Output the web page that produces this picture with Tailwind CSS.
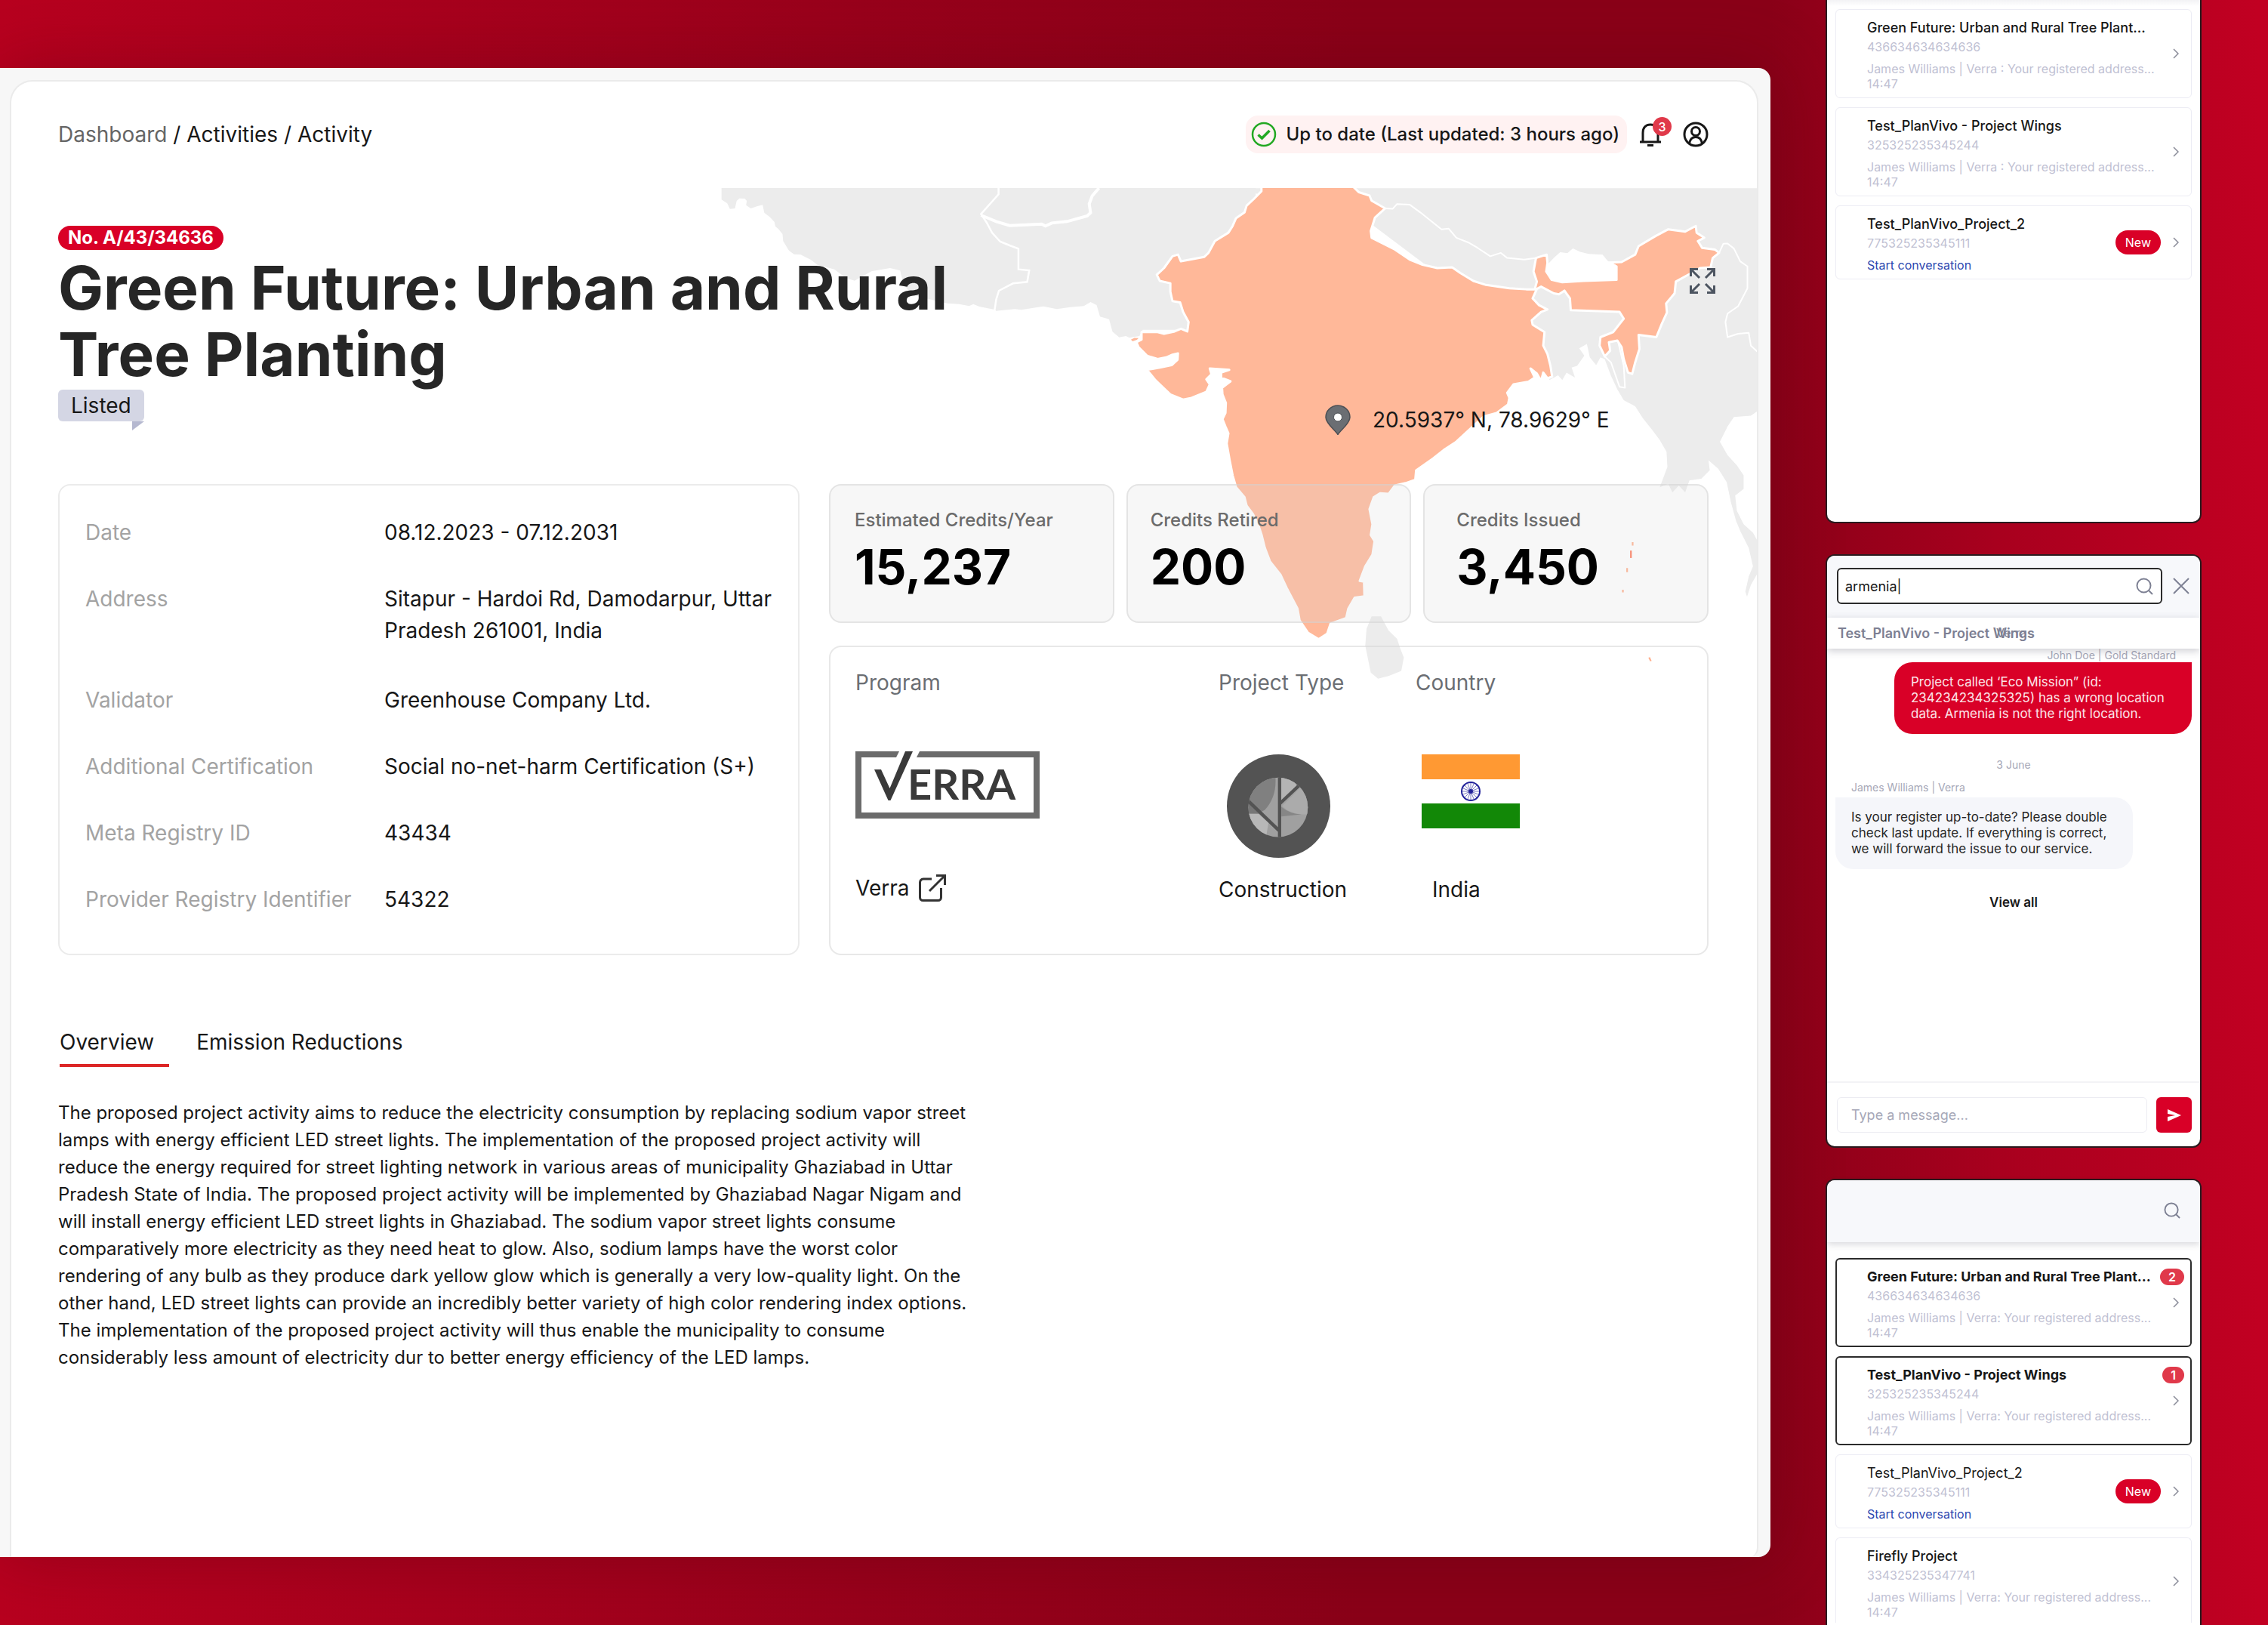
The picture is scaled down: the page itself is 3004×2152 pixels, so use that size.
<!DOCTYPE html>
<html lang="en">
<head>
<meta charset="utf-8">
<title>Green Future: Urban and Rural Tree Planting</title>
<script src="https://cdn.jsdelivr.net/npm/@tailwindcss/browser@4"></script>
</head>
<body class="font-['Inter',sans-serif] text-[#171717]">
<div class="flex min-h-screen items-stretch gap-[73px] overflow-hidden bg-[linear-gradient(90deg,#b8001f_0%,#98001b_38%,#8a0018_60%,#8a0018_78%,#a8001e_88%,#c20022_100%)] pr-[88px]">

  <!-- Activity window -->
  <main class="my-[90px] flex min-w-0 flex-1 flex-col rounded-r-2xl bg-[#f7f7f7] pt-4 pr-4 pl-[13px] shadow-[0_0_90px_rgba(90,0,16,0.35)]">
    <div class="relative flex-1 overflow-hidden rounded-t-[30px] rounded-br-xl border-2 border-b-0 border-[#ebebeb] bg-white px-[62px] pt-[45px]">

      <!-- Map -->
      <div class="absolute top-[141px] right-0 h-[660px] w-[1377px]">
        <svg class="size-full" viewBox="950 249 1377 660" role="img" aria-label="Map of India">
          <g transform="translate(940 230) scale(0.446429 0.333333)" fill="#ececec">
            <path d="M35,57V103L52,118L60,140L75,138L80,108L88,98L104,99L110,108L108,125L122,138L140,130L157,124L162,155L178,172L192,192L195,210L204,220L216,240L218,268L235,305L250,320L270,322L300,342L320,362L370,380L405,415L430,425L480,388L535,375L565,385L575,440L600,480L640,495L705,515L740,518L770,526L782,518L800,528L845,540L850,545L905,538L925,541L960,533L990,527L1030,538L1070,530L1110,526L1130,510L1148,522L1158,568L1185,578L1195,628L1215,650L1235,645L1245,652L1275,645L1285,620H1420L1620,400V57Z"/>
            <g fill="none" stroke="#fff">
              <path vector-effect="non-scaling-stroke" stroke-width="2.5" d="M857,57V82L805,160L822,195L838,235L862,270L890,285L916,298V380L948,384L942,430L900,436L858,465L850,500L845,545"/>
              <path vector-effect="non-scaling-stroke" stroke-width="4" d="M805,165L850,190L890,206L985,200L996,208L1015,196L1060,190L1120,168L1130,155L1126,120L1135,88L1155,57"/>
            </g>
          </g>
          <g transform="translate(1480 230) scale(0.561224 0.446429)" stroke-linejoin="round">
            <path fill="#ececec" d="M280,43H1512V703L1495,718L1455,722L1440,750L1422,795L1440,835L1462,865L1478,895V935L1458,955L1462,1000L1478,1040L1500,1065L1511,1090V1185L1495,1220L1486,1255L1482,1240L1490,1195L1500,1165L1490,1110L1470,1060L1460,1030L1448,975L1438,915L1418,875L1395,850L1398,880L1378,905L1350,910L1340,945L1325,925L1310,945L1300,920L1280,930L1298,870L1296,825L1280,790L1262,760L1240,725L1222,690L1195,672L1180,640L1165,600L1150,550L1140,545L1130,568L1115,545L1108,505L1090,518L1102,540L1085,570L1072,575L1080,605L1060,590L1050,612L1040,598L1020,612L970,500L600,150Z"/>
            <path fill="#ffb899" stroke="#fff" stroke-width="3" vector-effect="non-scaling-stroke" d="M340,38V52L322,75L305,95L300,115L280,132L272,155L262,175L230,200L215,235L205,247L150,260L143,240L130,245L110,280L93,300L100,318L125,325V350L130,378L148,382L155,410L168,440L165,468L150,460L135,468L110,475L95,470H57V492L45,500L50,515L70,540L95,550L115,545L130,537L143,533L142,552L128,568L100,575L70,582L90,613L125,655L155,670L175,665L210,647L218,625L210,610L222,595L218,578L264,582L245,590V605L267,616L247,635L248,655L256,680L255,710L248,728L255,750L262,770L258,800L265,850L272,895L280,930L300,960L305,985L320,1010L332,1040L340,1070L348,1110L360,1150L385,1190L400,1230L425,1290L430,1325L450,1362L475,1381L495,1365L503,1335L540,1318L545,1290L560,1258L583,1254L582,1210L572,1208L585,1165L602,1130L607,1090L598,1072L602,1040L595,995L605,960L620,948L640,950L655,925L680,918L703,908L705,880L745,845L770,820L800,795L830,760L865,720L895,710L922,685L925,665L920,650L935,625L970,617L985,605L975,578L990,593L1000,615L1005,590L1015,607L1026,602L1022,570L1015,535L1005,510L1008,470L980,448L978,435L1000,410L1015,403L995,390L980,370L990,342L1000,335L1030,355L1042,358L1055,347L1068,370L1070,405L1185,410L1195,430L1170,470L1140,485L1138,510L1150,542L1163,525L1160,500L1180,495L1190,515L1195,550L1205,590L1215,594L1222,560L1232,520L1230,478L1272,485L1285,445L1297,412L1295,385L1315,355L1318,320L1350,298L1375,280L1400,278L1405,250L1420,235L1410,225L1380,220L1370,200L1385,190L1367,175L1365,155L1340,172L1300,165L1270,185L1230,215L1222,240L1190,262L1158,264L1178,275V315L1100,318L1050,322L1025,315L1012,290L1015,265L1013,240L988,250L982,290L990,320L985,343H965L925,340L870,330L840,318L810,295L790,278L755,280L720,270L690,255L655,225L600,190L598,170L608,130L632,103L600,80L595,65L570,55L556,38Z"/>
            <path fill="#ffb899" d="M32,492L40,487L50,488L46,493L36,497Z"/>
            <path fill="#fff" d="M1012,290L1016,268L1030,250L1045,233L1062,236L1075,222L1092,232L1112,238L1145,240L1158,260L1176,270V313L1100,318L1050,322L1025,315Z"/>
            <g fill="none" stroke="#fff" stroke-width="2">
              <path vector-effect="non-scaling-stroke" d="M632,103L650,104L660,90L690,92L715,115L740,140L765,165L782,163L800,190L830,205L850,220L880,245L905,235L920,250L960,255L988,250"/>
              <path vector-effect="non-scaling-stroke" d="M1150,542L1165,560L1185,632L1198,635L1195,570L1182,500"/>
              <path vector-effect="non-scaling-stroke" d="M1405,250L1420,235L1430,208L1440,207L1455,222L1470,260L1487,275V340L1465,393L1440,415L1435,440L1440,485L1465,475L1490,472L1495,510L1512,530"/>
            </g>
            <path fill="#ececec" d="M600,1313H622L640,1355L660,1380L668,1410L676,1435L670,1475L640,1490L615,1498L598,1480L585,1400L588,1350Z"/>
            <g fill="none" stroke="#ffb08e" stroke-width="4">
              <path d="M1216,1093V1103M1203,1170V1182M1193,1234V1242M1255,1435L1259,1446"/>
              <path stroke="#ff7a5a" d="M1212,1118V1140"/>
            </g>
          </g>
        </svg>
        <button type="button" aria-label="Expand map" class="absolute top-[106px] right-[55px] size-[34px]">
          <svg class="size-full" viewBox="0 0 34 34" fill="none" stroke="#4d5561" stroke-width="3"><path d="M1.500 11V1.500H11M2 2L13 13M23 1.500H32.500V11M32 2L21 13M1.500 23V32.500H11M2 32L13 21M23 32.500H32.500V23M32 32L21 21"/></svg>
        </button>
        <div class="absolute top-[286px] left-[805px] flex items-center gap-[29px]">
          <svg class="h-10 w-[34px]" viewBox="0 0 34 40"><path d="M17,39.500C13,33 1,25 1,16.500A16,15.500 0 0 1 33,16.500C33,25 21,33 17,39.500Z" fill="#6b6e73" stroke="#4c4f54" stroke-width="1.500"/><circle cx="17" cy="16.500" r="5.500" fill="#fff" stroke="#4c4f54"/></svg>
          <span class="text-[28px] leading-[42px]">20.5937° N, 78.9629° E</span>
        </div>
      </div>

      <header class="relative flex h-[50px] items-center justify-between pr-0.5">
        <nav aria-label="Breadcrumb" class="text-[28px] leading-[42px]"><a href="#" class="text-[#666]">Dashboard</a> / <a href="#">Activities</a> / <a href="#">Activity</a></nav>
        <div class="flex items-center gap-4">
          <div class="flex h-[50px] items-center gap-3 rounded-2xl bg-[#fff2f2] pr-2.5 pl-[7px]">
            <svg class="size-[34px]" viewBox="0 0 34 34" fill="none" stroke="#22a822"><circle cx="17" cy="17" r="15" stroke-width="2.500"/><path d="M9.500 17.500L14.500 22L24.500 12" stroke-width="3.500"/></svg>
            <span class="text-[24px] leading-[42px] font-medium">Up to date (Last updated: 3 hours ago)</span>
          </div>
          <button type="button" aria-label="Notifications, 3 unread" class="relative size-[34px]">
            <svg class="size-full" viewBox="0 0 34 34" fill="none" stroke="#171717" stroke-width="3"><path d="M1 27H29M5 27V15C5 8 9 4 15 4S25 8 25 15V27"/><path d="M11 31.500H19"/></svg>
            <span class="absolute -top-1.5 left-[18px] flex size-[25px] items-center justify-center rounded-full bg-[#e0394a] text-[16px] leading-5 font-medium text-white">3</span>
          </button>
          <button type="button" aria-label="Account" class="ml-2 size-[34px]">
            <svg class="size-full" viewBox="0 0 34 34" fill="none" stroke="#171717" stroke-width="3"><circle cx="17" cy="17" r="15"/><circle cx="17" cy="13" r="5.500"/><path d="M8.500 29C9.500 23 12.500 20.500 17 20.500S24.500 23 25.500 29"/></svg>
          </button>
        </div>
      </header>

      <section class="relative mt-24 flex flex-col items-start">
        <span class="flex h-8 items-center rounded-2xl bg-[#d90027] px-[13px] text-[24px] leading-8 font-bold text-white">No. A/43/34636</span>
        <h1 class="mt-1.5 max-w-[1240px] text-[80px] leading-[88px] font-bold text-[#262626]">Green Future: Urban and Rural Tree Planting</h1>
        <div class="relative mt-[3px] rounded-md bg-[#d4d6e4] px-[17px] text-[28px] leading-[42px]">Listed
          <svg class="absolute top-full right-0 h-3 w-4" viewBox="0 0 16 12"><path d="M0 0H16L0 12Z" fill="#b5b8d0"/></svg>
        </div>
      </section>

      <section class="relative mt-[83px] grid grid-cols-[982fr_1165fr] gap-[39px] pr-0.5">
        <dl class="flex flex-col gap-[46px] rounded-2xl border-2 border-[#ebebeb] pt-[41px] pb-[51px] pl-[34px] text-[28px] leading-[42px]">
          <div class="flex"><dt class="w-[396px] shrink-0 text-[#a3a3a3]">Date</dt><dd>08.12.2023 - 07.12.2031</dd></div>
          <div class="flex pb-1"><dt class="w-[396px] shrink-0 text-[#a3a3a3]">Address</dt><dd>Sitapur - Hardoi Rd, Damodarpur, Uttar Pradesh 261001, India</dd></div>
          <div class="flex"><dt class="w-[396px] shrink-0 text-[#a3a3a3]">Validator</dt><dd>Greenhouse Company Ltd.</dd></div>
          <div class="flex"><dt class="w-[396px] shrink-0 text-[#a3a3a3]">Additional Certification</dt><dd>Social no-net-harm Certification (S+)</dd></div>
          <div class="flex"><dt class="w-[396px] shrink-0 text-[#a3a3a3]">Meta Registry ID</dt><dd>43434</dd></div>
          <div class="flex"><dt class="w-[396px] shrink-0 text-[#a3a3a3]">Provider Registry Identifier</dt><dd>54322</dd></div>
        </dl>

        <div class="flex flex-col gap-[30px]">
          <div class="grid h-[184px] grid-cols-3 gap-4">
            <div class="rounded-2xl border-2 border-[#d2d2d2]/50 bg-[#dcdcdc]/22 pt-7 pl-8">
              <p class="text-[24px] leading-9 font-medium text-[#6b6b6b]">Estimated Credits/Year</p>
              <p class="text-[64px] leading-[88px] font-bold text-black">15,237</p>
            </div>
            <div class="rounded-2xl border-2 border-[#d2d2d2]/50 bg-[#dcdcdc]/22 pt-7 pl-[30px]">
              <p class="text-[24px] leading-9 font-medium text-[#6b6b6b]">Credits Retired</p>
              <p class="text-[64px] leading-[88px] font-bold text-black">200</p>
            </div>
            <div class="rounded-2xl border-2 border-[#d2d2d2]/50 bg-[#dcdcdc]/22 pt-7 pl-[42px]">
              <p class="text-[24px] leading-9 font-medium text-[#6b6b6b]">Credits Issued</p>
              <p class="text-[64px] leading-[88px] font-bold text-black">3,450</p>
            </div>
          </div>

          <div class="grid flex-1 grid-cols-[481px_261px_1fr] rounded-2xl border-2 border-[#d2d2d2]/50 pt-[26px] pl-[33px] text-[28px] leading-[42px]">
            <div class="flex flex-col">
              <h2 class="text-[#6b6e73]">Program</h2>
              <div class="flex h-[230px] items-center">
                <svg class="h-[90px] w-[244px]" viewBox="0 0 244 90" role="img" aria-label="Verra">
                  <path fill="#6b6b6b" d="M0 0H58L54 8H8V81H236V8H81L85 0H244V89H0Z"/>
                  <path fill="#3a3a3a" d="M25 24H34L45.500 49L66 0H76L46.500 65H43.500Z"/>
                  <text x="69" y="64" fill="#3a3a3a" font-family="Lato, sans-serif" font-weight="700" font-size="56">ERRA</text>
                </svg>
              </div>
              <a href="#" class="flex items-center gap-3">Verra
                <svg class="size-[38px]" viewBox="0 0 38 38" fill="none" stroke="#333" stroke-width="3"><path d="M18 7H7A5 5 0 0 0 2.500 11.500V31.500A4 4 0 0 0 6.500 35.500H26.500A4 4 0 0 0 30.500 31.500V19"/><path d="M15 23L35 3M24 2.500H35.500V15"/></svg>
              </a>
            </div>
            <div class="flex flex-col">
              <h2 class="text-[#6b6e73]">Project Type</h2>
              <div class="flex h-[232px] items-center pt-[52px] pl-[11px]">
                <svg class="size-[137px]" viewBox="80 54 410 410" role="img" aria-label="Construction">
                  <circle cx="285" cy="259" r="205" fill="#535353"/>
                  <clipPath id="lens"><circle cx="283" cy="264" r="118"/></clipPath>
                  <g clip-path="url(#lens)">
                    <path fill="#a0a0a0" d="M160 140H410V390H160Z"/>
                    <path fill="#808080" d="M160 140H272Q280 220 230 275L200 290L160 250Z"/>
                    <path fill="#767676" d="M160 245L215 290H160Z"/>
                    <path fill="#b8b8b8" d="M160 290H205L245 325L235 385H160Z"/>
                    <path fill="#b4b4b4" d="M296 140H345L355 180L296 235Z"/>
                    <path fill="#ababab" d="M300 258L372 185L410 200V292Q330 295 300 258Z"/>
                    <path fill="#868686" d="M296 262Q330 290 375 292L296 300Z"/>
                    <path stroke="#535353" stroke-width="13" fill="none" d="M289 140V390M160 234L289 358M289 250L372 172"/>
                  </g>
                </svg>
              </div>
              <p>Construction</p>
            </div>
            <div class="flex flex-col">
              <h2 class="text-[#6b6e73]">Country</h2>
              <div class="flex h-[232px] items-center pt-3.5 pl-2">
                <svg class="h-[98px] w-[130px]" viewBox="0 0 130 98" role="img" aria-label="Flag of India">
                  <path fill="#fff" d="M0 0H130V98H0Z"/><path fill="#ff9933" d="M0 0H130V33H0Z"/><path fill="#128807" d="M0 65H130V98H0Z"/>
                  <g stroke="#22229a" fill="none"><circle cx="65" cy="49" r="12" stroke-width="2"/><path stroke-width="1" stroke-opacity=".6" d="M65 38V60M54 49H76M57 41L73 57M73 41L57 57M61 39L69 59M69 39L61 59M55 45L75 53M55 53L75 45"/></g>
                  <circle cx="65" cy="49" r="3" fill="#22229a"/>
                </svg>
              </div>
              <p class="pl-[22px]">India</p>
            </div>
          </div>
        </div>
      </section>

      <section class="relative mt-[94px]">
        <div role="tablist" class="flex items-start gap-9 pl-0.5 text-[28px] leading-[42px]">
          <button type="button" role="tab" aria-selected="true" class="border-b-4 border-[#dc2626] pr-5 pb-2">Overview</button>
          <button type="button" role="tab" aria-selected="false">Emission Reductions</button>
        </div>
        <p class="mt-[43px] max-w-[1220px] text-[24px] leading-9">The proposed project activity aims to reduce the electricity consumption by replacing sodium vapor street lamps with energy efficient LED street lights. The implementation of the proposed project activity will reduce the energy required for street lighting network in various areas of municipality Ghaziabad in Uttar Pradesh State of India. The proposed project activity will be implemented by Ghaziabad Nagar Nigam and will install energy efficient LED street lights in Ghaziabad. The sodium vapor street lights consume comparatively more electricity as they need heat to glow. Also, sodium lamps have the worst color rendering of any bulb as they produce dark yellow glow which is generally a very low-quality light. On the other hand, LED street lights can provide an incredibly better variety of high color rendering index options. The implementation of the proposed project activity will thus enable the municipality to consume considerably less amount of electricity dur to better energy efficiency of the LED lamps.</p>
      </section>
    </div>
  </main>

  <!-- Conversations -->
  <aside class="flex w-[498px] shrink-0 flex-col gap-[41px]">
    <section class="min-h-[693px] rounded-b-xl border-2 border-t-0 border-[#2a1a1e] bg-white bg-linear-to-b from-[#f3f3f5] to-white to-[8px] px-[11px] pt-3">
      <ul class="flex flex-col gap-3">
        <li class="flex items-center rounded-md border border-[#ececf4] pt-3 pr-4 pb-[7px] pl-[41px]">
          <div class="min-w-0 flex-1 text-[16px] leading-5 text-[#bfc1d3]">
            <h3 class="text-[18px] leading-6 font-medium whitespace-nowrap text-[#171717]">Green Future: Urban and Rural Tree Plant...</h3>
            <p class="leading-[26px]">436634634634636</p>
            <p class="mt-1.5 whitespace-nowrap">James Williams | Verra : Your registered address...</p>
            <p class="pb-px">14:47</p>
          </div>
          <svg class="mb-1.5 h-3.5 w-2" viewBox="0 0 8 14" fill="none" stroke="#8a8c99" stroke-width="1.500"><path d="M1 1L7 7L1 13"/></svg>
        </li>
        <li class="flex items-center rounded-md border border-[#ececf4] pt-3 pr-4 pb-[7px] pl-[41px]">
          <div class="min-w-0 flex-1 text-[16px] leading-5 text-[#bfc1d3]">
            <h3 class="text-[18px] leading-6 font-medium whitespace-nowrap text-[#171717]">Test_PlanVivo - Project Wings</h3>
            <p class="leading-[26px]">325325235345244</p>
            <p class="mt-1.5 whitespace-nowrap">James Williams | Verra : Your registered address...</p>
            <p class="pb-px">14:47</p>
          </div>
          <svg class="mb-1.5 h-3.5 w-2" viewBox="0 0 8 14" fill="none" stroke="#8a8c99" stroke-width="1.500"><path d="M1 1L7 7L1 13"/></svg>
        </li>
        <li class="flex items-center rounded-md border border-[#ececf4] pt-3 pr-4 pb-2 pl-[41px]">
          <div class="min-w-0 flex-1 text-[16px] leading-5 text-[#bfc1d3]">
            <h3 class="text-[18px] leading-6 font-medium whitespace-nowrap text-[#171717]">Test_PlanVivo_Project_2</h3>
            <p class="leading-[26px]">775325235345111</p>
            <a href="#" class="mt-1.5 block text-[#2b47b0]">Start conversation</a>
          </div>
          <span class="mr-4 mb-1 flex h-8 items-center rounded-full bg-[#d90027] px-[13px] text-[16px] leading-5 text-white">New</span>
          <svg class="mb-1 h-3.5 w-2" viewBox="0 0 8 14" fill="none" stroke="#8a8c99" stroke-width="1.500"><path d="M1 1L7 7L1 13"/></svg>
        </li>
      </ul>
    </section>

    <section class="flex min-h-[786px] flex-col overflow-hidden rounded-xl border-2 border-[#2a1a1e] bg-white">
      <form class="flex items-start gap-3.5 bg-[#f7f8fb] pt-4 pr-3.5 pb-[18px] pl-[13px]">
        <label class="flex h-12 min-w-0 flex-1 items-center rounded-md border-2 border-[#2b2b2b] bg-white pr-2.5 pl-[9px]">
          <span class="sr-only">Search</span>
          <input type="text" value="armenia|" class="h-10 min-w-0 flex-1 text-[18px] leading-6 outline-none">
          <svg class="size-[23px]" viewBox="0 0 23 23" fill="none" stroke="#7d8093" stroke-width="2"><circle cx="10.500" cy="10.500" r="9"/><path d="M17 17L22 22"/></svg>
        </label>
        <button type="button" aria-label="Close search" class="mt-[13px] size-[22px]">
          <svg class="size-full" viewBox="0 0 22 22" fill="none" stroke="#7d8093" stroke-width="2"><path d="M1 1L21 21M21 1L1 21"/></svg>
        </button>
      </form>
      <div class="relative flex h-[41px] items-center bg-white pl-3.5 text-[18px] leading-6 font-semibold text-[#7d8093] shadow-[0_3px_10px_rgba(60,60,80,0.25)]">Test_PlanVivo - Project Wings
        <span class="absolute top-2 left-[224px] text-[16px] font-normal">Verra</span>
      </div>
      <div class="flex flex-1 flex-col px-[11px] text-[14px] leading-[18px] text-[#a6a8b8]">
        <p class="self-end pr-[21px]">John Doe | Gold Standard</p>
        <p class="w-[394px] self-end rounded-3xl rounded-tr-none bg-[#d90027] px-[22px] py-4 text-[17px] leading-[21px] text-white/90">Project called ‘Eco Mission” (id: 234234234325325) has a wrong location data. Armenia is not the right location.</p>
        <p class="mt-8 text-center">3 June</p>
        <p class="mt-3 pl-[21px]">James Williams | Verra</p>
        <p class="mt-1 w-[394px] rounded-3xl rounded-tl-none bg-[#f5f6fa] px-[21px] py-4 text-[17px] leading-[21px] text-[#262626]">Is your register up-to-date? Please double check last update. If everything is correct, we will forward the issue to our service.</p>
        <button type="button" class="mt-8 self-center text-[17px] leading-6 font-semibold text-[#171717]">View all</button>
      </div>
      <form class="flex gap-3 border-t-2 border-[#f3f3f6] pt-[19px] pr-[11px] pb-[18px] pl-[13px]">
        <input type="text" aria-label="Message" placeholder="Type a message..." class="h-[47px] min-w-0 flex-1 rounded-md border border-[#ececf2] pl-[18px] text-[18px] leading-6 outline-none placeholder:text-[#a6a8b8]">
        <button type="submit" aria-label="Send" class="flex size-[47px] items-center justify-center rounded-md bg-[#d90027]">
          <svg class="h-4 w-[18px]" viewBox="0 0 18 16" fill="#fff"><path d="M0 0L18 8L0 16V10L10 8L0 6Z"/></svg>
        </button>
      </form>
    </section>

    <section class="flex-1 rounded-t-xl border-2 border-b-0 border-[#2a1a1e] bg-white">
      <div class="flex h-[82px] items-center justify-end rounded-t-[10px] bg-[#f7f8fb] pr-[26px] pb-0.5 shadow-[0_3px_10px_rgba(60,60,80,0.2)]">
        <button type="button" aria-label="Search conversations" class="size-[22px]">
          <svg class="size-full" viewBox="0 0 23 23" fill="none" stroke="#7d8093" stroke-width="2"><circle cx="10.500" cy="10.500" r="9"/><path d="M17 17L22 22"/></svg>
        </button>
      </div>
      <ul class="flex flex-col gap-3 px-[11px] pt-[21px]">
        <li class="relative flex items-center rounded-md border-2 border-[#2b2b2b] pt-[11px] pr-[15px] pb-1.5 pl-10">
          <div class="min-w-0 flex-1 text-[16px] leading-5 text-[#bfc1d3]">
            <h3 class="text-[18px] leading-6 font-bold whitespace-nowrap text-[#171717]">Green Future: Urban and Rural Tree Plant...</h3>
            <p class="leading-[26px]">436634634634636</p>
            <p class="mt-1.5 whitespace-nowrap">James Williams | Verra: Your registered address...</p>
            <p class="pb-px">14:47</p>
          </div>
          <svg class="mb-1.5 h-3.5 w-2" viewBox="0 0 8 14" fill="none" stroke="#8a8c99" stroke-width="1.500"><path d="M1 1L7 7L1 13"/></svg>
          <span class="absolute top-3 right-2 flex h-[22px] items-center rounded-full bg-[#e0394a] px-[11px] text-[16px] leading-5 font-semibold text-white">2</span>
        </li>
        <li class="relative flex items-center rounded-md border-2 border-[#2b2b2b] pt-[11px] pr-[15px] pb-1.5 pl-10">
          <div class="min-w-0 flex-1 text-[16px] leading-5 text-[#bfc1d3]">
            <h3 class="text-[18px] leading-6 font-bold whitespace-nowrap text-[#171717]">Test_PlanVivo - Project Wings</h3>
            <p class="leading-[26px]">325325235345244</p>
            <p class="mt-1.5 whitespace-nowrap">James Williams | Verra: Your registered address...</p>
            <p class="pb-px">14:47</p>
          </div>
          <svg class="mb-1.5 h-3.5 w-2" viewBox="0 0 8 14" fill="none" stroke="#8a8c99" stroke-width="1.500"><path d="M1 1L7 7L1 13"/></svg>
          <span class="absolute top-3 right-2 flex h-[22px] items-center rounded-full bg-[#e0394a] px-[11px] text-[16px] leading-5 font-semibold text-white">1</span>
        </li>
        <li class="flex items-center rounded-md border border-[#ececf4] pt-3 pr-4 pb-2 pl-[41px]">
          <div class="min-w-0 flex-1 text-[16px] leading-5 text-[#bfc1d3]">
            <h3 class="text-[18px] leading-6 whitespace-nowrap text-[#171717]">Test_PlanVivo_Project_2</h3>
            <p class="leading-[26px]">775325235345111</p>
            <a href="#" class="mt-1.5 block text-[#2b47b0]">Start conversation</a>
          </div>
          <span class="mr-4 mb-1 flex h-8 items-center rounded-full bg-[#d90027] px-[13px] text-[16px] leading-5 text-white">New</span>
          <svg class="mb-1 h-3.5 w-2" viewBox="0 0 8 14" fill="none" stroke="#8a8c99" stroke-width="1.500"><path d="M1 1L7 7L1 13"/></svg>
        </li>
        <li class="flex items-center rounded-t-md border border-b-0 border-[#ececf4] pt-3 pr-4 pb-1 pl-[41px]">
          <div class="min-w-0 flex-1 text-[16px] leading-5 text-[#bfc1d3]">
            <h3 class="text-[18px] leading-6 font-medium whitespace-nowrap text-[#171717]">Firefly Project</h3>
            <p class="leading-[26px]">334325235347741</p>
            <p class="mt-1.5 whitespace-nowrap">James Williams | Verra: Your registered address...</p>
            <p>14:47</p>
          </div>
          <svg class="mb-1.5 h-3.5 w-2" viewBox="0 0 8 14" fill="none" stroke="#8a8c99" stroke-width="1.500"><path d="M1 1L7 7L1 13"/></svg>
        </li>
      </ul>
    </section>
  </aside>
</div>
</body>
</html>
